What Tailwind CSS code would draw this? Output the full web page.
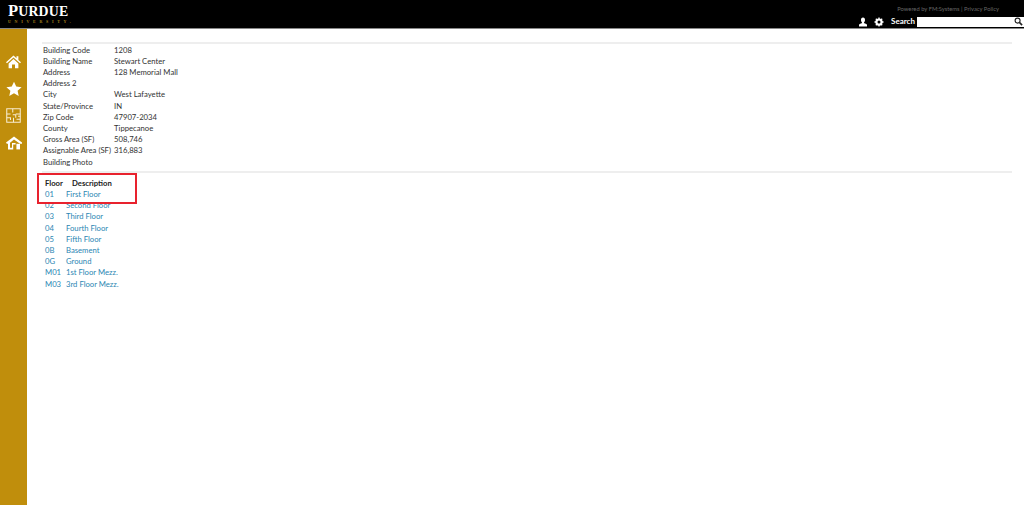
<!DOCTYPE html>
<html lang="en">
<head>
  <meta charset="UTF-8">
  <title>Building Detail</title>
  <script src="https://cdn.jsdelivr.net/npm/@tailwindcss/browser@4"></script>
</head>
<body class="bg-white font-['Lato','Liberation_Sans',sans-serif] text-[7.7px] leading-[11.2px] text-[#333] h-[505px] overflow-hidden relative">
  <!-- header -->
  <header class="h-[29px] bg-black border-b border-[#888] flex justify-between">
    <div class="pl-[8px] pt-[4px] text-white font-['Liberation_Serif',serif]">
      <div class="text-[16.500px] leading-[14px] font-bold tracking-[0.2px] whitespace-nowrap">P<span class="text-[13.800px]">URDUE</span></div>
      <div class="text-[#a8821c] text-[4px] leading-[6px] font-bold tracking-[3.700px] whitespace-nowrap">UNIVERSITY.</div>
    </div>
    <div class="flex flex-col items-end">
      <div class="text-[5.800px] leading-[9px] text-[#666] pt-[4px] pr-[25px]">Powered by FM:Systems | Privacy Policy</div>
      <div class="flex items-center mt-[3px]">
        <svg class="w-[10px] h-[10px] mr-[6px]" viewBox="0 0 20 20" fill="#fff"><path d="M10 1c3 0 4 2 4 5 0 2-1 4-2 5v1c2 1 6 2 6 4v3H2v-3c0-2 4-3 6-4v-1C7 10 6 8 6 6c0-3 1-5 4-5z"/></svg>
        <svg class="w-[10px] h-[10px] mr-[7px]" viewBox="0 0 20 20"><circle cx="10" cy="10" r="5.500" fill="none" stroke="#fff" stroke-width="3.500"/><path d="M10 1v18M1 10h18M3.600 3.600l12.800 12.800M16.400 3.600L3.600 16.400" stroke="#fff" stroke-width="2.600"/><circle cx="10" cy="10" r="3" fill="#000"/></svg>
        <span class="text-white text-[8px] font-bold mr-[2px]">Search</span>
        <div class="w-[107px] h-[10px] bg-white flex justify-end items-center pr-[1px]">
          <svg class="w-[9px] h-[9px]" viewBox="0 0 20 20" fill="none" stroke="#222"><circle cx="8" cy="8" r="5.500" stroke-width="2.500"/><path d="M12 12l6 6" stroke-width="3.500"/></svg>
        </div>
      </div>
    </div>
  </header>

  <div class="flex h-[476px]">
    <!-- sidebar -->
    <nav class="w-[27px] bg-[#c08e0c] flex flex-col items-center pt-[25px] gap-[11.500px]">
      <svg class="w-[15px] h-[15px]" viewBox="0 0 20 20" fill="#fff"><path d="M10 2L0 11l1.300 1.300L10 4.600l8.700 7.700L20 11l-3.500-3.100V3h-2.500v2.700z"/><path d="M3.500 12.500L10 6.800l6.500 5.700V19h-4.500v-5H8v5H3.500z"/></svg>
      <svg class="w-[16px] h-[16px]" viewBox="0 0 20 20" fill="#fff"><path d="M10 .8l2.800 6.200 6.700.7-5 4.500 1.400 6.600L10 15.400l-5.900 3.400 1.400-6.600-5-4.500 6.700-.7z"/></svg>
      <svg class="w-[15px] h-[15px]" viewBox="0 0 20 20" fill="none" stroke="#f7ecd0" stroke-width="1.400"><path d="M1 1h18v18H1z"/><path d="M1 8h5M9 1v5M9 9h4v4M13 8h6M1 13h5v3M10 13v6M14 15h5M16 11h3"/></svg>
      <svg class="w-[16px] h-[16px]" viewBox="0 0 20 20" fill="#fff"><path d="M10 2L0 9.500l1 1.500h1.500v7H9v-6h3v-2H7.500v6H5V9.800L10 5.500l7.500 5.500H20v-1.500z"/><path d="M13 11h4.500v7H13z"/></svg>
    </nav>

    <main class="flex-1 pt-[13px] pl-[15px] pr-[12px]">
      <div class="border-t-2 border-[#eee] pl-[1px] pt-[0.500px]">
        <table class="border-collapse">
          <tbody>
            <tr><td class="h-[11.200px]">Building Code</td><td>1208</td></tr>
            <tr><td class="h-[11.200px]">Building Name</td><td>Stewart Center</td></tr>
            <tr><td class="h-[11.200px]">Address</td><td>128 Memorial Mall</td></tr>
            <tr><td class="h-[11.200px]">Address 2</td><td></td></tr>
            <tr><td class="h-[11.200px]">City</td><td>West Lafayette</td></tr>
            <tr><td class="h-[11.200px]">State/Province</td><td>IN</td></tr>
            <tr><td class="h-[11.200px]">Zip Code</td><td>47907-2034</td></tr>
            <tr><td class="h-[11.200px]">County</td><td>Tippecanoe</td></tr>
            <tr><td class="h-[11.200px]">Gross Area (SF)</td><td>508,746</td></tr>
            <tr><td class="pr-[3px] h-[11.200px]">Assignable Area (SF)</td><td>316,883</td></tr>
            <tr><td class="h-[11.200px]">Building Photo</td><td></td></tr>
          </tbody>
        </table>
      </div>
      <div class="border-t-2 border-[#eee] mt-[3.500px] pl-[3px] pt-[4.500px]">
        <table class="border-collapse text-[#2b86b3]">
          <thead>
            <tr class="text-[#222]"><th class="text-left font-bold h-[11px] w-[21px]">Floor</th><th class="text-left font-bold pl-[6px]">Description</th></tr>
          </thead>
          <tbody>
            <tr><td class="h-[11.200px]">01</td><td>First Floor</td></tr>
            <tr><td class="h-[11.200px]">02</td><td>Second Floor</td></tr>
            <tr><td class="h-[11.200px]">03</td><td>Third Floor</td></tr>
            <tr><td class="h-[11.200px]">04</td><td>Fourth Floor</td></tr>
            <tr><td class="h-[11.200px]">05</td><td>Fifth Floor</td></tr>
            <tr><td class="h-[11.200px]">0B</td><td>Basement</td></tr>
            <tr><td class="h-[11.200px]">0G</td><td>Ground</td></tr>
            <tr><td class="h-[11.200px]">M01</td><td>1st Floor Mezz.</td></tr>
            <tr><td class="h-[11.200px]">M03</td><td>3rd Floor Mezz.</td></tr>
          </tbody>
        </table>
      </div>
    </main>
  </div>

  <!-- red highlight box -->
  <div class="absolute left-[37px] top-[173px] w-[100px] h-[31px] border-2 border-[#e8222e]"></div>
</body>
</html>
